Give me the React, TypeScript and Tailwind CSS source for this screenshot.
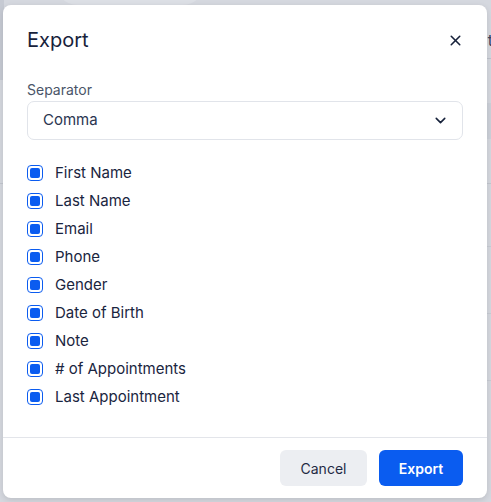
import { X, ChevronDown } from "lucide-react";

const fields = [
  "First Name",
  "Last Name",
  "Email",
  "Phone",
  "Gender",
  "Date of Birth",
  "Note",
  "# of Appointments",
  "Last Appointment",
];

function Check() {
  return (
    <span className="flex h-4 w-4 items-center justify-center rounded-[4px] border-[1.5px] border-[#0b5cf0] bg-white p-[2px]">
      <span className="h-full w-full rounded-[2px] bg-[#0b5cf0]" />
    </span>
  );
}

export default function App() {
  return (
    <div
      className="relative h-[502px] w-[491px] overflow-hidden bg-[#d5d8df]"
      style={{ fontFamily: "Inter, 'Noto Sans', sans-serif" }}
    >
      {/* faint page behind the overlay */}
      <div className="absolute left-[55px] top-[-40px] h-[45px] w-[150px] rounded-full bg-[#dcdfe5]" />
      <div className="absolute left-0 top-0 h-[80px] w-[4px] bg-[#c6cad3]" />
      <div className="absolute right-0 top-[58px] h-[1px] w-[10px] bg-[#bfc3cc]" />
      <div className="absolute right-0 top-[103px] h-[36px] w-[10px] bg-[#cdd1d9]" />
      <div className="absolute right-0 top-[183px] h-[1px] w-[10px] bg-[#c3c7cf]" />
      <div className="absolute left-0 top-[183px] h-[1px] w-[4px] bg-[#c3c7cf]" />
      <div className="absolute right-0 top-[246px] h-[1px] w-[10px] bg-[#c8ccd4]" />
      <div className="absolute right-0 top-[313px] h-[1px] w-[10px] bg-[#c8ccd4]" />
      <div className="absolute right-0 top-[380px] h-[1px] w-[10px] bg-[#c8ccd4]" />
      <div className="absolute right-[-2px] top-[28px] text-[16px] text-[#3a4660]">t</div>

      <div className="absolute left-[3px] top-[5px] flex h-[493px] w-[484px] flex-col rounded-[8px] bg-white shadow-[0_2px_6px_rgba(0,0,0,0.12)]">
        <div className="flex items-center justify-between px-6 pt-[22px]">
          <h2 className="text-[20px] leading-[26px] text-[#17223b]">Export</h2>
          <X className="mr-[-1px] h-[17px] w-[17px] text-[#17223b]" strokeWidth={2.2} />
        </div>

        <div className="flex-1 px-6 pt-[28px]">
          <label className="block text-[14px] leading-[18px] text-[#4a5568]">Separator</label>
          <div className="mt-[2px] flex h-[39px] items-center justify-between rounded-[7px] border border-[#e1e4ea] pl-[15px] pr-[13px]">
            <span className="text-[15px] text-[#2a3550]">Comma</span>
            <ChevronDown className="h-[17px] w-[17px] text-[#17223b]" strokeWidth={2.2} />
          </div>

          <div className="mt-[23px] flex flex-col gap-[8px]">
            {fields.map((f) => (
              <div key={f} className="flex h-[20px] items-center gap-[12px]">
                <Check />
                <span className="text-[15px] text-[#1a2540]">{f}</span>
              </div>
            ))}
          </div>
        </div>

        <div className="flex h-[61px] items-start justify-end gap-3 border-t border-[#e3e5ea] px-6 pt-[12px]">
          <button className="h-[36px] w-[87px] rounded-[6px] bg-[#eceef2] text-[14px] text-[#1f2a44]">
            Cancel
          </button>
          <button className="h-[36px] w-[84px] rounded-[6px] bg-[#0a5cf0] text-[14px] font-semibold text-white">
            Export
          </button>
        </div>
      </div>
    </div>
  );
}
